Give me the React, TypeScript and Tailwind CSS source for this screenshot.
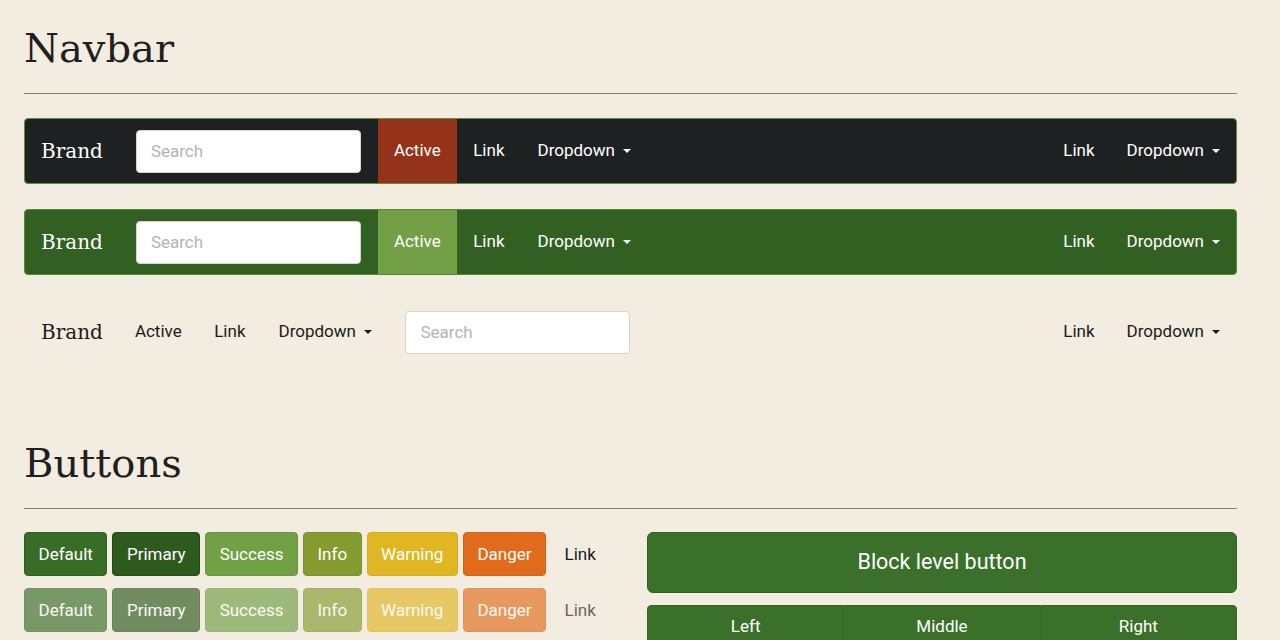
const slab = "font-['DejaVu_Serif',serif]";

const Caret = ({ color = 'border-t-white' }: { color?: string }) => (
  <span className={`ml-2 inline-block h-0 w-0 border-x-[4px] border-t-[4px] border-x-transparent align-middle ${color}`} />
);

const SearchBox = () => (
  <input
    placeholder="Search"
    className="h-[43px] w-[225px] rounded-[4px] border border-[#d8d4cc] bg-white px-[14px] text-[17px] text-[#333] placeholder:text-[#b4b4b4] outline-none"
  />
);

const Rule = () => <div className="h-px bg-[#6e8c5c]" />;

type NavProps = {
  bg: string;
  border: string;
  activeBg: string;
  text: string;
};

const FilledNavbar = ({ bg, border, activeBg, text }: NavProps) => (
  <nav className={`flex h-[66px] items-stretch rounded-[4px] border ${bg} ${border} ${text}`}>
    <div className={`flex items-center pl-4 pr-[17px] ${slab} text-[20px]`}>Brand</div>
    <div className="flex items-center pl-[16px] pr-[17px]">
      <SearchBox />
    </div>
    <a className={`flex items-center px-4 ${activeBg}`}>Active</a>
    <a className="flex items-center px-[16.5px]">Link</a>
    <a className="flex items-center px-[16.5px]">
      Dropdown
      <Caret />
    </a>
    <div className="ml-auto flex items-stretch">
      <a className="flex items-center px-4">Link</a>
      <a className="flex items-center px-4">
        Dropdown
        <Caret />
      </a>
    </div>
  </nav>
);

const buttons = [
  { label: 'Default', cls: 'bg-[#376d27] border-[#2f6121]' },
  { label: 'Primary', cls: 'bg-[#2e5a1e] border-[#264f18]' },
  { label: 'Success', cls: 'bg-[#72a045] border-[#68953d]' },
  { label: 'Info', cls: 'bg-[#849b2f] border-[#7a9029]' },
  { label: 'Warning', cls: 'bg-[#e0b722] border-[#d6ad1c]' },
  { label: 'Danger', cls: 'bg-[#e06c1b] border-[#d56316]' },
];

const ButtonRow = ({ disabled }: { disabled?: boolean }) => (
  <div className={`flex items-center gap-[5px] ${disabled ? 'opacity-65' : ''}`}>
    {buttons.map((b) => (
      <button
        key={b.label}
        className={`rounded-[4px] border px-[13.5px] py-[10px] text-[17px] leading-[22px] text-white ${b.cls}`}
      >
        {b.label}
      </button>
    ))}
    <button className="px-[13.5px] py-[10px] text-[17px] leading-[22px] text-[#1a1a1a]">Link</button>
  </div>
);

export default function App() {
  return (
    <div className="min-h-screen bg-[#f3ece1] pl-6 pr-[43px] font-['Roboto',sans-serif] text-[17px] text-[#1e2020]">
      <h1 className={`pt-[22px] text-[40px] leading-[52px] ${slab} font-normal`}>Navbar</h1>
      <div className="mt-[19px]">
        <Rule />
      </div>

      <div className="mt-6 flex flex-col gap-[25px]">
        <FilledNavbar bg="bg-[#1e2122]" border="border-[#5f8f35]" activeBg="bg-[#95331a]" text="text-white" />
        <FilledNavbar bg="bg-[#326023]" border="border-[#4f8e2e]" activeBg="bg-[#73a046]" text="text-white" />
      </div>

      <nav className="mt-6 flex h-[66px] items-stretch border border-transparent text-[#1a1a1a]">
        <div className={`flex items-center pl-4 pr-4 ${slab} text-[20px]`}>Brand</div>
        <a className="flex items-center px-4">Active</a>
        <a className="flex items-center px-[16.5px]">Link</a>
        <a className="flex items-center px-[16.5px]">
          Dropdown
          <Caret color="border-t-[#1a1a1a]" />
        </a>
        <div className="flex items-center pl-[17px]">
          <SearchBox />
        </div>
        <div className="ml-auto flex items-stretch">
          <a className="flex items-center px-4">Link</a>
          <a className="flex items-center px-4">
            Dropdown
            <Caret color="border-t-[#1a1a1a]" />
          </a>
        </div>
      </nav>

      <h1 className={`mt-[72px] text-[40px] leading-[52px] ${slab} font-normal`}>Buttons</h1>
      <div className="mt-[19px]">
        <Rule />
      </div>

      <div className="mt-[23px] grid grid-cols-[599px_590px] gap-6">
        <div className="flex flex-col gap-3">
          <ButtonRow />
          <ButtonRow disabled />
        </div>
        <div className="flex flex-col gap-3">
          <button className="h-[61px] w-full rounded-[6px] border border-[#2f6121] bg-[#3a7029] text-[21.5px] text-white">
            Block level button
          </button>
          <div className="flex">
            <button className="h-[44px] flex-1 rounded-l-[4px] border border-[#346826] bg-[#3a7029] text-white">Left</button>
            <button className="h-[44px] flex-1 border-y border-[#346826] bg-[#3a7029] text-white">Middle</button>
            <button className="h-[44px] flex-1 rounded-r-[4px] border border-[#346826] bg-[#3a7029] text-white">Right</button>
          </div>
        </div>
      </div>
    </div>
  );
}
